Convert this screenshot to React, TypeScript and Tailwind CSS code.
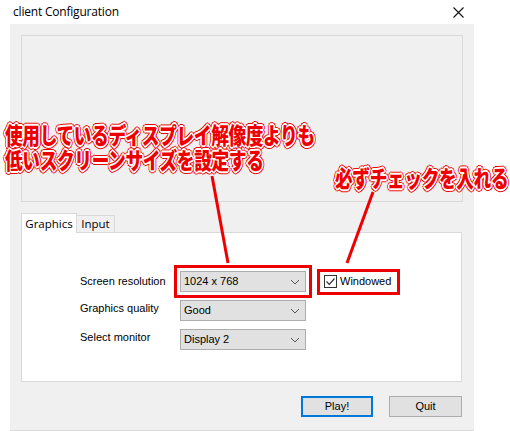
import React from 'react';

const outline =
  '[text-shadow:1px_0_0_#fff,-1px_0_0_#fff,0_1px_0_#fff,0_-1px_0_#fff,1px_1px_0_#fff,-1px_-1px_0_#fff,1px_-1px_0_#fff,-1px_1px_0_#fff,2px_0_0_#fff,-2px_0_0_#fff,0_2px_0_#fff,0_-2px_0_#fff,2px_2px_0_#e00,-2px_-2px_0_#e00,2px_-2px_0_#e00,-2px_2px_0_#e00,3px_0_0_#e00,-3px_0_0_#e00,0_3px_0_#e00,0_-3px_0_#e00]';

function Chevron() {
  return (
    <svg width="10" height="6" viewBox="0 0 10 6" className="shrink-0">
      <path d="M1 1 L5 5 L9 1" fill="none" stroke="#555" strokeWidth="1" />
    </svg>
  );
}

function Select({ value }: { value: string }) {
  return (
    <div className="w-[126px] h-[21px] bg-[#e1e1e1] border border-[#adadad] flex items-center justify-between pl-[3px] pr-[5px] text-[11px] text-black">
      <span>{value}</span>
      <Chevron />
    </div>
  );
}

export default function App() {
  return (
    <div className="relative w-[510px] h-[431px] bg-white overflow-hidden font-['Liberation_Sans',Arial,sans-serif] text-[11px] text-black">
      {/* title bar */}
      <div className="h-[24px] flex items-center justify-between pl-[13px] pr-[46px]">
        <span className="text-[12px] font-['Open_Sans','Liberation_Sans',sans-serif] tracking-[-0.2px]">client Configuration</span>
        <svg width="11" height="11" viewBox="0 0 11 11">
          <path d="M0.5 0.5 L10.5 10.5 M10.5 0.5 L0.5 10.5" stroke="#111" strokeWidth="1.1" />
        </svg>
      </div>

      {/* client area */}
      <div className="ml-[10px] w-[464px] h-[407px] bg-[#f0f0f0] border-b border-[#dadada] pt-[11px] px-[11px] flex flex-col">
        <div className="h-[167px] border border-[#d9d9d9] bg-[#f0f0f0]" />

        {/* tabs */}
        <div className="mt-[10px] flex items-end h-[20px] font-['Open_Sans','Liberation_Sans',sans-serif] text-[11.5px]">
          <div className="w-[56px] h-[20px] bg-white border border-b-0 border-[#d9d9d9] flex items-center justify-center relative z-10 -mb-px">
            Graphics
          </div>
          <div className="w-[38px] h-[17px] bg-[#f0f0f0] border border-l-0 border-b-0 border-[#d9d9d9] flex items-center justify-center">
            Input
          </div>
        </div>
        <div className="w-[441px] h-[150px] bg-white border border-[#d9d9d9] pl-[58px] pt-[38px] flex flex-col gap-[8px]">
          <div className="h-[21px] flex items-center">
            <span className="w-[100px]">Screen resolution</span>
            <div className="outline-[3px] outline-[#ee0000] outline-offset-[3px] outline">
              <Select value="1024 x 768" />
            </div>
            <div className="ml-[11px] h-[26px] w-[83px] shrink-0 border-[3px] border-[#ee0000] flex items-center pl-[4px] gap-[3px]">
              <div className="w-[13px] h-[13px] border border-[#333] bg-white flex items-center justify-center">
                <svg width="11" height="11" viewBox="0 0 11 11">
                  <path d="M1.5 5.5 L4.3 8.3 L9.5 2.5" fill="none" stroke="#333" strokeWidth="1.2" />
                </svg>
              </div>
              <span>Windowed</span>
            </div>
          </div>
          <div className="h-[21px] flex items-center">
            <span className="w-[100px] -mt-[4px]">Graphics quality</span>
            <Select value="Good" />
          </div>
          <div className="h-[21px] flex items-center">
            <span className="w-[100px] -mt-[5px]">Select monitor</span>
            <Select value="Display 2" />
          </div>
        </div>

        {/* buttons */}
        <div className="mt-[14px] flex justify-end gap-[16px] pr-[1px]">
          <div className="w-[72px] h-[21px] bg-[#e1e1e1] border-2 border-[#0078d7] flex items-center justify-center">
            Play!
          </div>
          <div className="w-[73px] h-[21px] bg-[#e1e1e1] border border-[#adadad] flex items-center justify-center">
            Quit
          </div>
        </div>
      </div>

      {/* annotations */}
      <svg className="absolute left-0 top-0 pointer-events-none" width="510" height="431">
        <line x1="212" y1="176" x2="228" y2="263" stroke="#ee0000" strokeWidth="3" />
        <line x1="373" y1="192" x2="347" y2="263" stroke="#ee0000" strokeWidth="3" />
      </svg>
      <div
        className={`absolute left-[5px] top-[122px] origin-top-left scale-x-[0.77] font-['Noto_Sans_CJK_JP',sans-serif] font-black text-[23px] leading-[25px] text-[#ee0000] whitespace-nowrap tracking-[-0.5px] ${outline}`}
      >
        <div>使用しているディスプレイ解像度よりも</div>
        <div>低いスクリーンサイズを設定する</div>
      </div>
      <div
        className={`absolute left-[335px] top-[164px] origin-top-left scale-x-[0.77] font-['Noto_Sans_CJK_JP',sans-serif] font-black text-[23px] leading-[26px] text-[#ee0000] whitespace-nowrap tracking-[-0.5px] ${outline}`}
      >
        必ずチェックを入れる
      </div>
    </div>
  );
}
